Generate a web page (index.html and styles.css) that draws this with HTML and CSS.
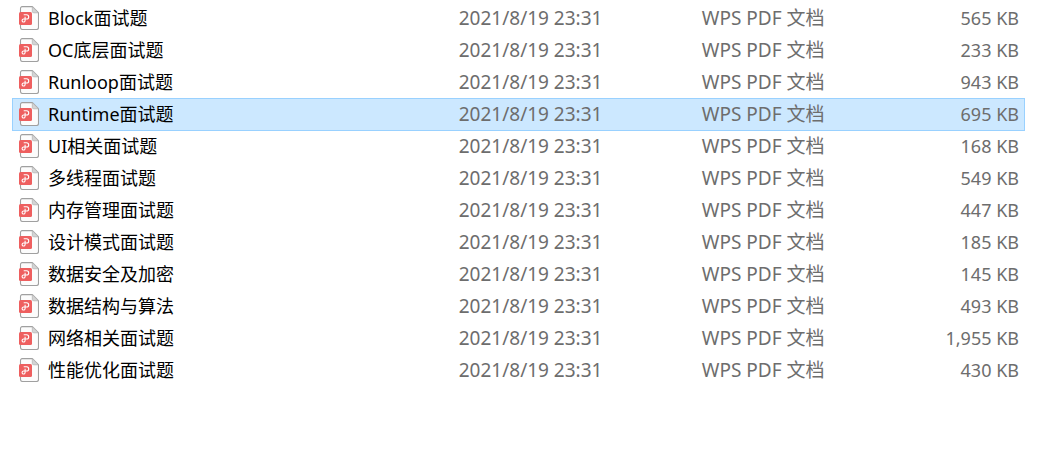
FILE: index.html
```
<!DOCTYPE html>
<html lang="zh-CN">
<head>
<meta charset="utf-8">
<title>面试题</title>
<link rel="stylesheet" href="styles.css">
</head>
<body>
<svg class="symbols" aria-hidden="true">
  <symbol id="pdf" viewBox="0 0 20 24">
    <path d="M3.5 .6h9.8l6.2 6.2v14.7a2 2 0 0 1-2 2h-14a2 2 0 0 1-2-2v-19a2 2 0 0 1 2-2z" fill="#fcfcfc" stroke="#a0a0a0" stroke-width="1.1"/>
    <path d="M13.3 .6l6.2 6.2h-4.7a1.5 1.5 0 0 1-1.5-1.5z" fill="#d4d4d4" stroke="#b0b0b0" stroke-width=".7"/>
    <rect x="0" y="6" width="13" height="13" rx="1.5" fill="#ee5f5f"/>
    <path d="M4.7 8.8h2.9a2.1 2.1 0 0 1 0 4.2H4.7a1.5 1.5 0 1 0 1.4 1.5v-3.7" fill="none" stroke="#fff" stroke-width="1.1"/>
  </symbol>
</svg>
<table class="files">
  <colgroup><col class="col-name"><col class="col-date"><col class="col-type"><col class="col-size"></colgroup>
  <tbody>
    <tr><td><div class="name"><svg class="icon" aria-hidden="true"><use href="#pdf"/></svg>Block面试题</div></td><td class="date">2021/8/19 23:31</td><td class="type">WPS PDF 文档</td><td class="size">565 KB</td></tr>
    <tr><td><div class="name"><svg class="icon" aria-hidden="true"><use href="#pdf"/></svg>OC底层面试题</div></td><td class="date">2021/8/19 23:31</td><td class="type">WPS PDF 文档</td><td class="size">233 KB</td></tr>
    <tr><td><div class="name"><svg class="icon" aria-hidden="true"><use href="#pdf"/></svg>Runloop面试题</div></td><td class="date">2021/8/19 23:31</td><td class="type">WPS PDF 文档</td><td class="size">943 KB</td></tr>
    <tr class="selected" aria-selected="true"><td><div class="name"><svg class="icon" aria-hidden="true"><use href="#pdf"/></svg>Runtime面试题</div></td><td class="date">2021/8/19 23:31</td><td class="type">WPS PDF 文档</td><td class="size">695 KB</td></tr>
    <tr><td><div class="name"><svg class="icon" aria-hidden="true"><use href="#pdf"/></svg>UI相关面试题</div></td><td class="date">2021/8/19 23:31</td><td class="type">WPS PDF 文档</td><td class="size">168 KB</td></tr>
    <tr><td><div class="name"><svg class="icon" aria-hidden="true"><use href="#pdf"/></svg>多线程面试题</div></td><td class="date">2021/8/19 23:31</td><td class="type">WPS PDF 文档</td><td class="size">549 KB</td></tr>
    <tr><td><div class="name"><svg class="icon" aria-hidden="true"><use href="#pdf"/></svg>内存管理面试题</div></td><td class="date">2021/8/19 23:31</td><td class="type">WPS PDF 文档</td><td class="size">447 KB</td></tr>
    <tr><td><div class="name"><svg class="icon" aria-hidden="true"><use href="#pdf"/></svg>设计模式面试题</div></td><td class="date">2021/8/19 23:31</td><td class="type">WPS PDF 文档</td><td class="size">185 KB</td></tr>
    <tr><td><div class="name"><svg class="icon" aria-hidden="true"><use href="#pdf"/></svg>数据安全及加密</div></td><td class="date">2021/8/19 23:31</td><td class="type">WPS PDF 文档</td><td class="size">145 KB</td></tr>
    <tr><td><div class="name"><svg class="icon" aria-hidden="true"><use href="#pdf"/></svg>数据结构与算法</div></td><td class="date">2021/8/19 23:31</td><td class="type">WPS PDF 文档</td><td class="size">493 KB</td></tr>
    <tr><td><div class="name"><svg class="icon" aria-hidden="true"><use href="#pdf"/></svg>网络相关面试题</div></td><td class="date">2021/8/19 23:31</td><td class="type">WPS PDF 文档</td><td class="size">1,955 KB</td></tr>
    <tr><td><div class="name"><svg class="icon" aria-hidden="true"><use href="#pdf"/></svg>性能优化面试题</div></td><td class="date">2021/8/19 23:31</td><td class="type">WPS PDF 文档</td><td class="size">430 KB</td></tr>
  </tbody>
</table>
</body>
</html>
```
FILE: styles.css
```
body {
  margin: 0;
  padding: 2px 25px 0 12px;
  background: #fff;
  color: #6d6d6d;
  font: 18px/32px "Noto Sans", "Noto Sans CJK SC", sans-serif;
}

.symbols {
  display: none;
}

.files {
  width: 100%;
  table-layout: fixed;
  border-spacing: 0;
}

.col-name {
  width: 44%;
}

.col-date,
.col-type {
  width: 24%;
}

.files td {
  height: 32px;
  padding: 0;
  vertical-align: middle;
  white-space: nowrap;
}

.name {
  display: flex;
  align-items: center;
  gap: 9px;
  padding-left: 7px;
  color: #000;
}

.icon {
  flex: none;
  width: 20px;
  height: 24px;
}

.files .date,
.files .type {
  padding-left: 1px;
  font-size: 19px;
}

.files .size {
  padding-right: 6px;
  text-align: right;
}

.selected {
  background: #cce8ff;
  box-shadow: inset 1px 1px #99d1ff, inset -1px 0 #99d1ff, 0 1px #99d1ff;
}
```
